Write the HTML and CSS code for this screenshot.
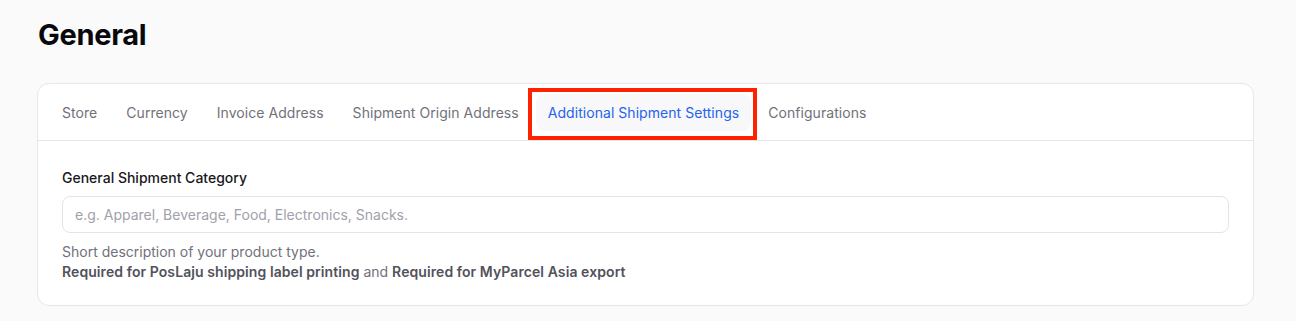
FILE: index.html
```html
<!DOCTYPE html>
<html lang="en">
<head>
  <meta charset="UTF-8">
  <meta name="viewport" content="width=device-width, initial-scale=1.0">
  <title>General</title>
  <link rel="stylesheet" href="styles.css">
</head>
<body>
  <div class="page">
    <h1>General</h1>

    <div class="card">
      <nav class="tabs">
        <a class="tab">Store</a>
        <a class="tab">Currency</a>
        <a class="tab">Invoice Address</a>
        <a class="tab">Shipment Origin Address</a>
        <a class="tab active">Additional Shipment Settings</a>
        <a class="tab">Configurations</a>
      </nav>

      <div class="card-body">
        <label class="field-label" for="category">General Shipment Category</label>
        <input type="text" id="category" placeholder="e.g. Apparel, Beverage, Food, Electronics, Snacks.">
        <p class="help">
          Short description of your product type.<br>
          <strong>Required for PosLaju shipping label printing</strong> and <strong>Required for MyParcel Asia export</strong>
        </p>
      </div>
    </div>
  </div>
</body>
</html>
```

FILE: styles.css
```css
body {
  font-family: Inter, "Noto Sans", sans-serif;
  margin: 0;
  background-color: #fafafa;
  color: #09090b;
}
.page {
  padding: 16px 42px 0 37px;
}
h1 {
  margin: 0 0 29px 1px;
  font-size: 29px;
  line-height: 38px;
  font-weight: 700;
  letter-spacing: -0.3px;
}
.card {
  background: white;
  border: 1px solid #e7e7e9;
  border-radius: 12px;
}
.tabs {
  display: flex;
  gap: 5px;
  padding: 10px 12px 9px;
  border-bottom: 1px solid #e7e7e9;
}
.tab {
  position: relative;
  padding: 8px 12px;
  font-size: 14px;
  line-height: 21px;
  letter-spacing: 0.05px;
  color: #71717a;
  border-radius: 8px;
  cursor: pointer;
}
.tab.active {
  color: #2563eb;
  background: #f8f8fa;
}
/* red highlight box around the active tab */
.tab.active::after {
  content: "";
  position: absolute;
  top: -6px;
  left: -8px;
  right: -6px;
  bottom: -9px;
  border: 4px solid #ff2200;
}
.card-body {
  padding: 27px 24px 23px;
}
.field-label {
  display: block;
  font-size: 14px;
  line-height: 20px;
  font-weight: 500;
  color: #18181b;
  margin-bottom: 8px;
}
input {
  display: block;
  width: 100%;
  height: 37px;
  padding: 0 12px;
  font-family: inherit;
  font-size: 14px;
  border: 1px solid #e4e4e7;
  border-radius: 8px;
  box-sizing: border-box;
  outline: none;
}
input::placeholder {
  color: #a1a1aa;
}
.help {
  margin: 9px 0 0;
  font-size: 14px;
  line-height: 20px;
  color: #71717a;
}
.help strong {
  font-weight: 600;
  letter-spacing: 0.08px;
  color: #52525b;
}
```
